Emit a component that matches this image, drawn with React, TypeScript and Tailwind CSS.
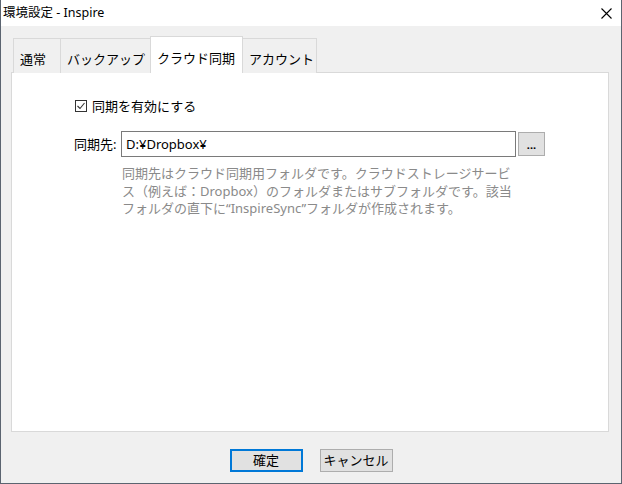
import { useState } from "react";

const font = { fontFamily: '"Noto Sans", "Noto Sans CJK JP", sans-serif' };

const tabs = [
  { label: "通常", w: "w-[48px]" },
  { label: "バックアップ", w: "w-[91px]" },
  { label: "クラウド同期", w: "w-[93px]" },
  { label: "アカウント", w: "w-[75px]" },
];

export default function App() {
  const [active, setActive] = useState(2);
  const [enabled, setEnabled] = useState(true);

  return (
    <div
      className="w-[622px] h-[484px] flex flex-col bg-[#f0f0f0] border-x border-b border-[#5b6470] text-[13px] text-black overflow-hidden"
      style={font}
    >
      {/* title bar */}
      <div className="h-[26px] shrink-0 bg-white flex items-center justify-between pl-[2px] pr-[9px]">
        <span className="text-[12.5px] leading-none">環境設定 - Inspire</span>
        <svg width="11" height="11" viewBox="0 0 11 11" className="text-black">
          <path d="M0.5 0.5 L10.5 10.5 M10.5 0.5 L0.5 10.5" stroke="currentColor" strokeWidth="1.1" />
        </svg>
      </div>

      <div className="flex-1 flex flex-col pt-[10px] pl-[10px] pr-[12px]">
        {/* tabs */}
        <div className="flex items-end h-[37px] pl-[2px] relative z-10">
          {tabs.map((t, i) => {
            const sel = i === active;
            return (
              <button
                key={t.label}
                onClick={() => setActive(i)}
                className={
                  sel
                    ? `${t.w} h-[37px] -ml-px first:ml-0 bg-white border border-b-0 border-[#d9d9d9] text-left pl-[6px] pt-[5px] leading-[20px] self-start relative z-10`
                    : `${t.w} h-[35px] -ml-px first:ml-0 bg-[#f0f0f0] border border-b-0 border-[#d9d9d9] text-left pl-[6px] pt-[6px] leading-[20px] self-end`
                }
              >
                <span className="block whitespace-nowrap">{t.label}</span>
              </button>
            );
          })}
        </div>

        {/* panel */}
        <div className="h-[360px] -mt-px bg-white border border-[#d9d9d9] pl-[63px] pt-[23px]">
          <label className="flex items-center h-[20px] gap-[5px] cursor-default">
            <span
              onClick={() => setEnabled(!enabled)}
              className="w-[12px] h-[12px] border border-[#333333] bg-white flex items-center justify-center"
            >
              {enabled && (
                <svg width="10" height="10" viewBox="0 0 10 10">
                  <path d="M1.5 5 L4 7.5 L8.5 2" fill="none" stroke="#333333" strokeWidth="1.1" />
                </svg>
              )}
            </span>
            <span className="leading-[20px]">同期を有効にする</span>
          </label>

          <div className="flex items-center mt-[15px] -ml-px">
            <span className="w-[47px] whitespace-nowrap leading-[20px]">同期先:</span>
            <div className="w-[395px] h-[26px] border border-[#7a7a7a] bg-white flex items-center pl-[4px] leading-none">
              D:¥Dropbox¥
            </div>
            <button className="ml-[2px] w-[27px] h-[24px] bg-[#e1e1e1] border border-[#adadad] flex items-end justify-center pb-[5px] text-[11px] leading-none font-bold">
              ...
            </button>
          </div>

          <div className="ml-[47px] mt-[8px] text-[#8a8a8a] leading-[17.5px] whitespace-nowrap">
            <div>同期先はクラウド同期用フォルダです。クラウドストレージサービ</div>
            <div>ス（例えば：Dropbox）のフォルダまたはサブフォルダです。該当</div>
            <div>フォルダの直下に“InspireSync”フォルダが作成されます。</div>
          </div>
        </div>

        {/* footer */}
        <div className="flex-1 flex justify-center items-start gap-[17px] pt-[17px] pl-[2px]">
          <button className="w-[73px] h-[23px] bg-[#e1e1e1] border-2 border-[#0078d7] leading-none">
            確定
          </button>
          <button className="w-[73px] h-[23px] bg-[#e1e1e1] border border-[#adadad] leading-none">
            キャンセル
          </button>
        </div>
      </div>
    </div>
  );
}
